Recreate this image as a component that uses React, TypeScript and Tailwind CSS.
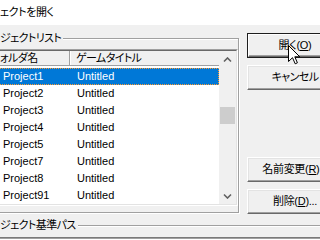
import React from "react";

const rows = [
  "Project1",
  "Project2",
  "Project3",
  "Project4",
  "Project5",
  "Project7",
  "Project8",
  "Project91",
];

function Chevron({ down }: { down?: boolean }) {
  return (
    <svg width="9" height="6" viewBox="0 0 9 6">
      <polyline
        points={down ? "1,1.5 4.5,5 8,1.5" : "1,4.5 4.5,1 8,4.5"}
        fill="none"
        stroke="#606060"
        strokeWidth="1.6"
      />
    </svg>
  );
}

function Btn({ label, def }: { label: React.ReactNode; def?: boolean }) {
  if (def) {
    return (
      <div className="h-[25px] w-[96px] border border-[#1e1e1e] bg-[#f0f0f0]">
        <div className="h-full w-full border border-t-white border-l-white border-b-[#696969] border-r-[#696969] shadow-[inset_-1px_-1px_0_#a0a0a0] flex items-center justify-center text-black">
          {label}
        </div>
      </div>
    );
  }
  return (
    <div className="h-[25px] w-[96px] border border-t-white border-l-white border-b-[#696969] border-r-[#696969] shadow-[inset_-1px_-1px_0_#a0a0a0,inset_1px_1px_0_#e3e3e3] bg-[#f0f0f0] flex items-center justify-center text-black">
      {label}
    </div>
  );
}

const jp = "tracking-[-0.6px]";

export default function App() {
  return (
    <div
      className="relative w-[320px] h-[240px] overflow-hidden bg-[#f0f0f0] text-[11px] text-black [font-feature-settings:'palt']"
      style={{ fontFamily: '"Liberation Sans", "Noto Sans CJK JP", sans-serif' }}
    >
      {/* title bar */}
      <div className="h-[25px] bg-white flex items-center text-[11px] leading-none pb-[1px]">
        <span className="tracking-[-0.4px]">ェクトを開く</span>
      </div>

      <div className="flex">
        {/* group box 1 */}
        <div className="relative ml-[-8px] mt-[13px] w-[253px] h-[175px] border border-[#a0a0a0] shadow-[inset_1px_1px_0_#fff,1px_1px_0_#fff] pt-[10px]">
          <div className={"absolute left-[7px] top-[-8px] bg-[#f0f0f0] pr-[2px] leading-[14px] " + "tracking-[-0.6px]"}>
            ジェクトリスト
          </div>
          {/* list view */}
          <div className="ml-[1px] w-[244px] h-[157px] border border-t-[#a0a0a0] border-l-[#a0a0a0] border-b-white border-r-white">
            <div className="h-full w-full border border-t-[#696969] border-l-[#696969] border-b-[#e3e3e3] border-r-[#e3e3e3] bg-white flex">
              <div className="flex-1 flex flex-col">
                {/* header */}
                <div className="h-[15px] flex border-b border-[#a0a0a0] bg-[#f0f0f0] leading-[14px]">
                  <div className="w-[74px] border-r border-[#a0a0a0] pl-[4px] tracking-[-0.6px]">ォルダ名</div>
                  <div className="flex-1 border-l border-white pl-[5px] tracking-[-0.6px]">ゲームタイトル</div>
                </div>
                <div className="pt-[2px] flex flex-col">
                  {rows.map((r, i) => (
                    <div
                      key={r}
                      className={
                        i === 0
                          ? "h-[17px] flex items-center bg-[#0078d7] text-white border border-dotted border-[#ff9a2e]"
                          : "h-[17px] flex items-center"
                      }
                    >
                      <div className={i === 0 ? "w-[73px] pl-[6px]" : "w-[74px] pl-[7px]"}>{r}</div>
                      <div className="pl-[7px]">Untitled</div>
                    </div>
                  ))}
                </div>
              </div>
              {/* scrollbar */}
              <div className="w-[17px] flex flex-col bg-[#f0f0f0]">
                <div className="h-[17px] flex items-center justify-center">
                  <Chevron />
                </div>
                <div className="flex-1">
                  <div className="mt-[39px] mx-[1px] h-[17px] bg-[#cdcdcd]" />
                </div>
                <div className="h-[17px] flex items-center justify-center pt-[1px]">
                  <Chevron down />
                </div>
              </div>
            </div>
          </div>
        </div>

        {/* buttons */}
        <div className="ml-[8px] pt-[8px] flex flex-col">
          <Btn
            def
            label={
              <span className="tracking-[-0.3px]">
                開く(<span className="underline">O</span>)
              </span>
            }
          />
          <div className="mt-[7px]">
            <Btn label={<span className={jp}>キャンセル</span>} />
          </div>
          <div className="mt-[67px]">
            <Btn
              label={
                <span className="tracking-[-0.3px]">
                  名前変更(<span className="underline">R</span>)...
                </span>
              }
            />
          </div>
          <div className="mt-[7px]">
            <Btn
              label={
                <span className="tracking-[-0.3px]">
                  削除(<span className="underline">D</span>)...
                </span>
              }
            />
          </div>
        </div>
      </div>

      {/* group box 2 */}
      <div className="relative ml-[-8px] mt-[11px] w-[340px] h-[40px] border border-[#a0a0a0] shadow-[inset_1px_1px_0_#fff] pt-[11px]">
        <div className="absolute left-[7px] top-[-8px] bg-[#f0f0f0] pr-[2px] leading-[14px] tracking-[-0.6px]">
          ジェクト基準パス
        </div>
        <div className="h-[20px] border-t border-[#7a7a7a] shadow-[inset_0_1px_0_#a0a0a0] bg-white" />
      </div>

      {/* mouse cursor */}
      <svg
        className="absolute left-[288px] top-[45px]"
        width="13"
        height="20"
        viewBox="0 0 13 20"
      >
        <path
          d="M0.5 0.5 L0.5 16.5 L4.5 12.7 L7.2 18.8 L9.4 17.8 L6.8 11.8 L11.8 11.8 Z"
          fill="white"
          stroke="black"
          strokeWidth="1"
          strokeLinejoin="miter"
        />
      </svg>
    </div>
  );
}
